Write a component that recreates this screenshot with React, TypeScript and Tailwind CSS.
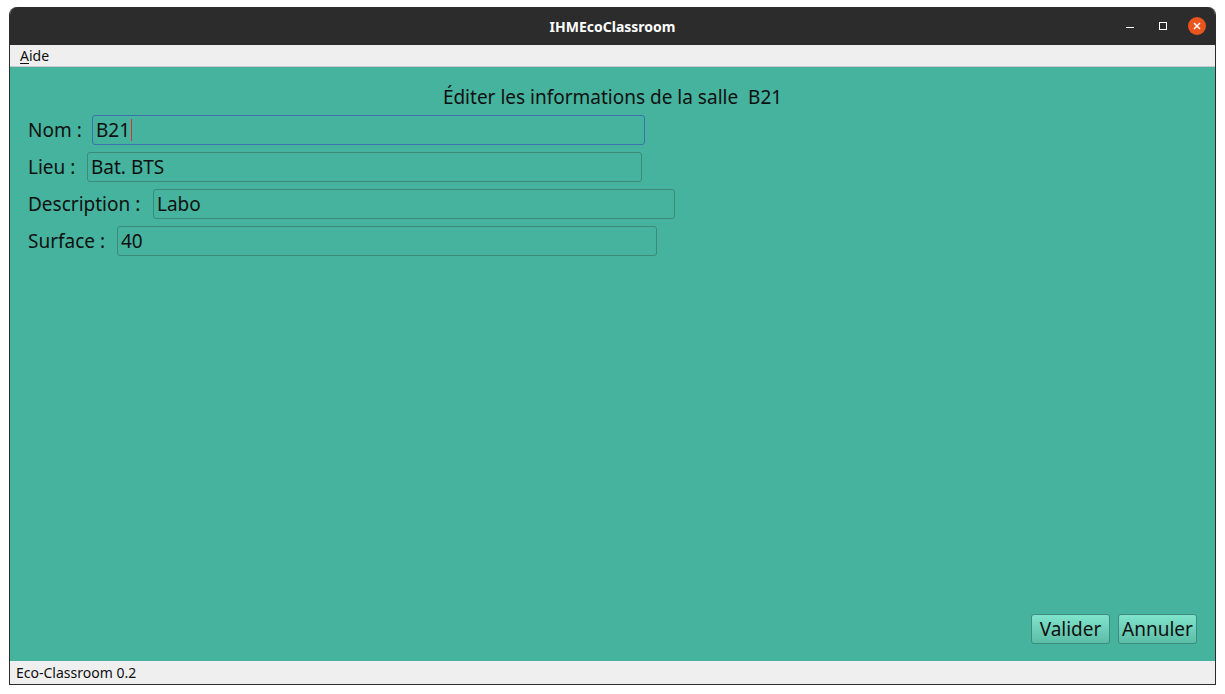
import React from 'react';

const font = { fontFamily: '"Noto Sans", "Open Sans", sans-serif' };

interface FieldRowProps {
  label: string;
  labelWidth: string;
  value: string;
  width: string;
  focused?: boolean;
}

function FieldRow({ label, labelWidth, value, width, focused = false }: FieldRowProps) {
  return (
    <div className="flex items-center gap-[11px] h-[30px]">
      <span className={`${labelWidth} text-[19px] text-[#101010] leading-none whitespace-nowrap`}>{label}</span>
      <div
        className={`${width} h-[30px] rounded-[3px] flex items-center px-[3px] text-[19px] text-[#101010] ${
          focused ? 'border border-[#3a72b0]' : 'border border-[#3a8c79]'
        }`}
      >
        <span className="leading-none">{value}</span>
        {focused && <span className="w-px h-[22px] bg-[#e0303a] ml-px" />}
      </div>
    </div>
  );
}

export default function App() {
  return (
    <div className="w-[1225px] h-[694px] bg-white pt-[7px] px-[9px] pb-[9px]" style={font}>
      <div className="h-full flex flex-col rounded-t-[8px] overflow-hidden border-x border-b border-[#2c2c2c]">
        {/* Title bar */}
        <div className="h-[38px] bg-[#2c2c2c] relative flex items-center justify-center">
          <span className="text-white text-[14px] font-bold">IHMEcoClassroom</span>
          <div className="absolute right-[9px] top-0 h-full flex items-center">
            <div className="w-[8px] h-px bg-white mr-[25px] mt-[3px]" />
            <div className="w-[8px] h-[8px] border border-white mr-[21px]" />
            <div className="w-[18px] h-[18px] rounded-full bg-[#e9541f] flex items-center justify-center">
              <svg width="10" height="10" viewBox="0 0 10 10" fill="none">
                <path d="M2 2L8 8M8 2L2 8" stroke="white" strokeWidth="1.5" />
              </svg>
            </div>
          </div>
        </div>

        {/* Menu bar */}
        <div className="h-[22px] bg-[#efefef] border-b border-[#c9c9c9] flex items-center px-[10px]">
          <span className="text-[14px] text-[#101010]">
            <span className="underline underline-offset-2">A</span>ide
          </span>
        </div>

        {/* Content */}
        <div className="flex-1 bg-[#45b39d] flex flex-col px-[18px] pt-[19px] pb-[17px]">
          <div className="text-center text-[19px] text-[#101010] leading-[22px]">
            Éditer les informations de la salle&nbsp; B21
          </div>
          <div className="flex flex-col gap-[7px] mt-[7px]">
            <FieldRow label="Nom :" labelWidth="w-[53px]" value="B21" width="w-[553px]" focused />
            <FieldRow label="Lieu :" labelWidth="w-[48px]" value="Bat. BTS" width="w-[555px]" />
            <FieldRow label="Description :" labelWidth="w-[114px]" value="Labo" width="w-[522px]" />
            <FieldRow label="Surface :" labelWidth="w-[78px]" value="40" width="w-[540px]" />
          </div>
          <div className="flex-1" />
          <div className="flex justify-end gap-[8px]">
            <button className="w-[79px] h-[30px] rounded-[3px] border border-[#3f8c7a] bg-gradient-to-b from-[#80e4cc] to-[#5cbda6] text-[19px] text-[#101010] leading-none">
              Valider
            </button>
            <button className="w-[79px] h-[30px] rounded-[3px] border border-[#3f8c7a] bg-gradient-to-b from-[#80e4cc] to-[#5cbda6] text-[19px] text-[#101010] leading-none">
              Annuler
            </button>
          </div>
        </div>

        {/* Status bar */}
        <div className="h-[23px] bg-[#efefef] flex items-center px-[6px]">
          <span className="text-[14px] text-[#101010]">Eco-Classroom 0.2</span>
        </div>
      </div>
    </div>
  );
}
